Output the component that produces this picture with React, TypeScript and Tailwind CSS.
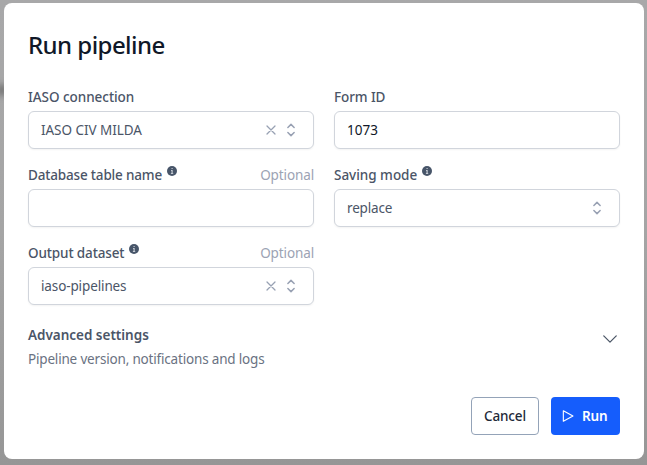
import type { ReactNode } from "react";

function Info() {
  return (
    <svg className="-mt-2 ml-1 size-3" viewBox="0 0 12 12">
      <circle cx="6" cy="6" r="5" fill="#475569" />
      <path d="M5.5 3h1.2v1.1H5.5zM5 5h1.7v3.1h.5V9H4.9v-.9h.6V5.9H5z" fill="#c3c9d2" />
    </svg>
  );
}

function Stroke({ d, className, width = 1.5 }: { d: string; className: string; width?: number }) {
  return (
    <svg
      className={className}
      viewBox="0 0 24 24"
      fill="none"
      stroke="currentColor"
      strokeWidth={width}
      strokeLinecap="round"
      strokeLinejoin="round"
    >
      <path d={d} />
    </svg>
  );
}

type FieldProps = { label: ReactNode; info?: boolean; optional?: boolean; children: ReactNode };

function Field({ label, info, optional, children }: FieldProps) {
  return (
    <div>
      <div className="mb-1 flex h-5 items-center">
        <span className="font-medium text-[#4b5567]">{label}</span>
        {info && <Info />}
        {optional && <span className="ml-auto tracking-[-0.12px] text-[#9ca3b4]">Optional</span>}
      </div>
      {children}
    </div>
  );
}

type BoxProps = { children?: ReactNode; clear?: boolean; select?: boolean };

function Box({ children, clear, select }: BoxProps) {
  return (
    <div className="flex h-[38px] items-center rounded-md border border-gray-300 bg-white pr-3 pl-3 shadow-xs">
      <span className={select ? "text-[#4b5567]" : "text-gray-900"}>{children}</span>
      <span className="ml-auto flex items-center gap-0.5 text-[#98a1b3]">
        {clear && <Stroke className="size-4" width={1.9} d="M6 18 18 6M6 6l12 12" />}
        {select && (
          <Stroke
            className="size-5"
            width={1.8}
            d="M8.25 15 12 18.75 15.75 15m-7.5-6L12 5.25 15.75 9"
          />
        )}
      </span>
    </div>
  );
}

export default function App() {
  return (
    <div className="relative h-[465px] w-[647px] overflow-hidden bg-linear-to-b from-[#a8a8a9] via-[#a5a5a5] to-[#969696] pt-[3px] pl-1 font-['Noto_Sans','Open_Sans',sans-serif] text-[13.5px] leading-5">
      <div className="absolute top-[84px] -left-1 h-3 w-3 rounded-full bg-[#777] blur-[3px]" />
      <div className="relative flex h-[456px] w-[640px] flex-col rounded-lg bg-white px-6 pt-6 pb-6">
        <h1 className="h-9 text-2xl leading-9 font-medium tracking-[-0.55px] text-gray-900">
          Run pipeline
        </h1>
        <div className="mt-6 grid grid-cols-2 gap-x-5 gap-y-4">
          <Field label={<span className="tracking-[-0.04px]">IASO connection</span>}>
            <Box clear select>
              <span className="tracking-[-0.04px]">IASO CIV MILDA</span>
            </Box>
          </Field>
          <Field label={<span className="tracking-[-0.1px]">Form ID</span>}>
            <Box>1073</Box>
          </Field>
          <Field label={<span className="tracking-[-0.17px]">Database table name</span>} info optional>
            <Box />
          </Field>
          <Field label={<span className="tracking-[-0.02px]">Saving mode</span>} info>
            <Box select>
              <span className="tracking-[-0.15px]">replace</span>
            </Box>
          </Field>
          <Field label={<span className="tracking-[-0.13px]">Output dataset</span>} info optional>
            <Box clear select>
              <span className="tracking-[-0.12px]">iaso-pipelines</span>
            </Box>
          </Field>
        </div>
        <div className="mt-5 flex justify-between">
          <div>
            <div className="font-semibold tracking-[-0.02px] text-[#4b5567]">Advanced settings</div>
            <div className="mt-1 tracking-[-0.18px] text-gray-500">
              Pipeline version, notifications and logs
            </div>
          </div>
          <Stroke className="mt-1 size-5 text-gray-600" d="m19.5 8.25-7.5 7.5-7.5-7.5" />
        </div>
        <div className="mt-auto flex justify-end gap-3">
          <button className="h-[38px] w-[68px] rounded border border-[#94a3b8] bg-white font-medium tracking-[-0.13px] text-gray-800">
            Cancel
          </button>
          <button className="flex h-[38px] w-[69px] items-center rounded bg-[#155dfc] pl-[10px] font-semibold text-white">
            <Stroke className="mr-[7px] size-[14px]" width={1.9} d="M4 3v18L20.500 12Z" />
            <span className="tracking-[-0.2px]">Run</span>
          </button>
        </div>
      </div>
    </div>
  );
}
